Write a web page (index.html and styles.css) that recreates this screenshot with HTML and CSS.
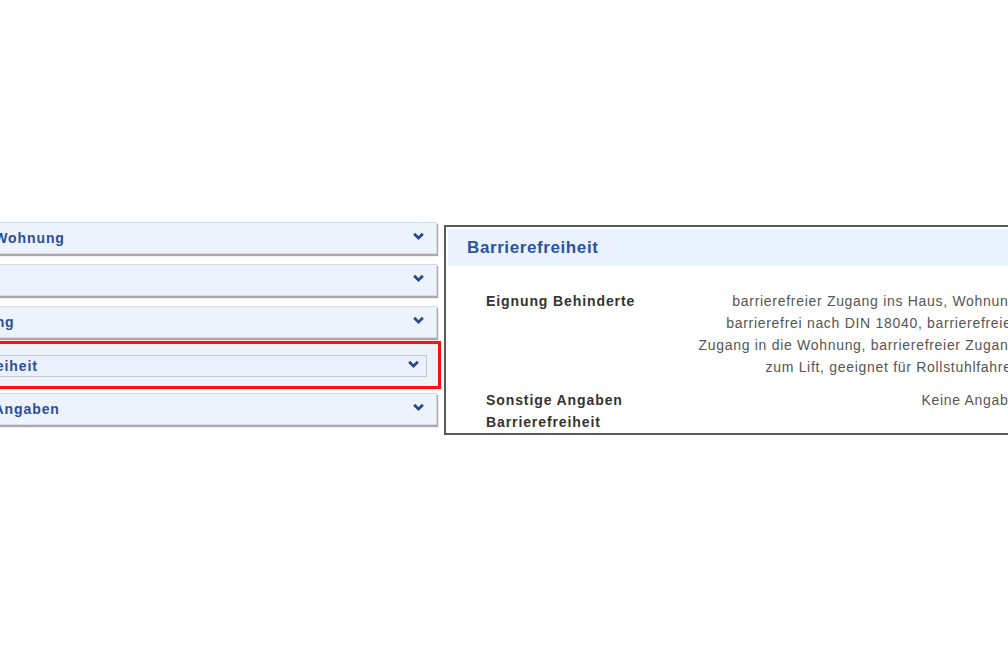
FILE: index.html
```html
<!DOCTYPE html>
<html lang="de">
<head>
  <meta charset="UTF-8" />
  <title>Barrierefreiheit</title>
  <link rel="stylesheet" href="styles.css">
</head>
<body>
  <div class="page">
    <div class="accordion">
      <div class="item">
        <span>Infos zur Wohnung</span>
        <svg class="chev" viewBox="0 0 12 8"><path d="M2 1.5 L6 5.5 L10 1.5" /></svg>
      </div>
      <div class="item">
        <span>Kosten</span>
        <svg class="chev" viewBox="0 0 12 8"><path d="M2 1.5 L6 5.5 L10 1.5" /></svg>
      </div>
      <div class="item">
        <span>Ausstattung</span>
        <svg class="chev" viewBox="0 0 12 8"><path d="M2 1.5 L6 5.5 L10 1.5" /></svg>
      </div>
      <div class="item-active">
        <div class="select">
          <span>Barrierefreiheit</span>
          <svg class="chev" viewBox="0 0 12 8"><path d="M2 1.5 L6 5.5 L10 1.5" /></svg>
        </div>
      </div>
      <div class="item">
        <span>Sonstige Angaben</span>
        <svg class="chev" viewBox="0 0 12 8"><path d="M2 1.5 L6 5.5 L10 1.5" /></svg>
      </div>
    </div>

    <div class="panel">
      <div class="panel-head">Barrierefreiheit</div>
      <div class="panel-body">
        <div class="label">Eignung Behinderte</div>
        <div class="value">barrierefreier Zugang ins Haus, Wohnung<br>barrierefrei nach DIN 18040, barrierefreier<br>Zugang in die Wohnung, barrierefreier Zugang<br>zum Lift, geeignet für Rollstuhlfahrer</div>
        <div class="label">Sonstige Angaben<br>Barrierefreiheit</div>
        <div class="value">Keine Angabe</div>
      </div>
    </div>
  </div>
</body>
</html>
```

FILE: styles.css
```css
body {
  margin: 0;
  background: #ffffff;
  font-family: 'Liberation Sans', Arial, sans-serif;
  overflow: hidden;
}

.page {
  display: flex;
  align-items: flex-start;
  gap: 3px;
  margin-left: -100px;
  padding-top: 222px;
}

.accordion {
  width: 541px;
  flex-shrink: 0;
}

.item {
  display: flex;
  align-items: center;
  justify-content: space-between;
  height: 30px;
  margin: 0 4px 10px 0;
  padding: 0 11px 0 22px;
  background: #ecf3fd;
  border: 1px solid #d6dbe3;
  box-shadow: 1px 2px 1px #a9a9a9;
  color: #2b4d9c;
  font-size: 14px;
  font-weight: bold;
  letter-spacing: 0.9px;
}

.item-active {
  margin: -7px 0 4px 0;
  padding: 11px 11px 9px 0;
  background: #eef3fb;
  border: 3px solid #ff1010;
  box-shadow: 0 0 1px #ff8080;
}

.select {
  display: flex;
  align-items: center;
  justify-content: space-between;
  height: 20px;
  padding: 0 6px 0 19px;
  background: #eaf1fc;
  border: 1px solid #c3c7ce;
  color: #2b4d9c;
  font-size: 14px;
  font-weight: bold;
  letter-spacing: 0.9px;
}

.chev {
  width: 13px;
  height: 9px;
  margin-top: -4px;
}

.chev path {
  fill: none;
  stroke: #27478f;
  stroke-width: 2.6;
}

.panel {
  width: 588px;
  height: 202px;
  flex-shrink: 0;
  margin-top: 3px;
  padding: 2px;
  border: 2px solid #595959;
  overflow: hidden;
  background: #ffffff;
}

.panel-head {
  height: 37px;
  line-height: 37px;
  padding-left: 19px;
  background: #eaf2fd;
  color: #2c52a4;
  font-size: 17px;
  font-weight: bold;
  letter-spacing: 0.6px;
}

.panel-body {
  display: grid;
  grid-template-columns: 200px 1fr;
  row-gap: 11px;
  padding: 24px 19px 0 38px;
  font-size: 14px;
  line-height: 22px;
}

.label {
  color: #333333;
  font-weight: bold;
  letter-spacing: 0.9px;
}

.value {
  color: #555555;
  text-align: right;
  letter-spacing: 0.7px;
}
```
